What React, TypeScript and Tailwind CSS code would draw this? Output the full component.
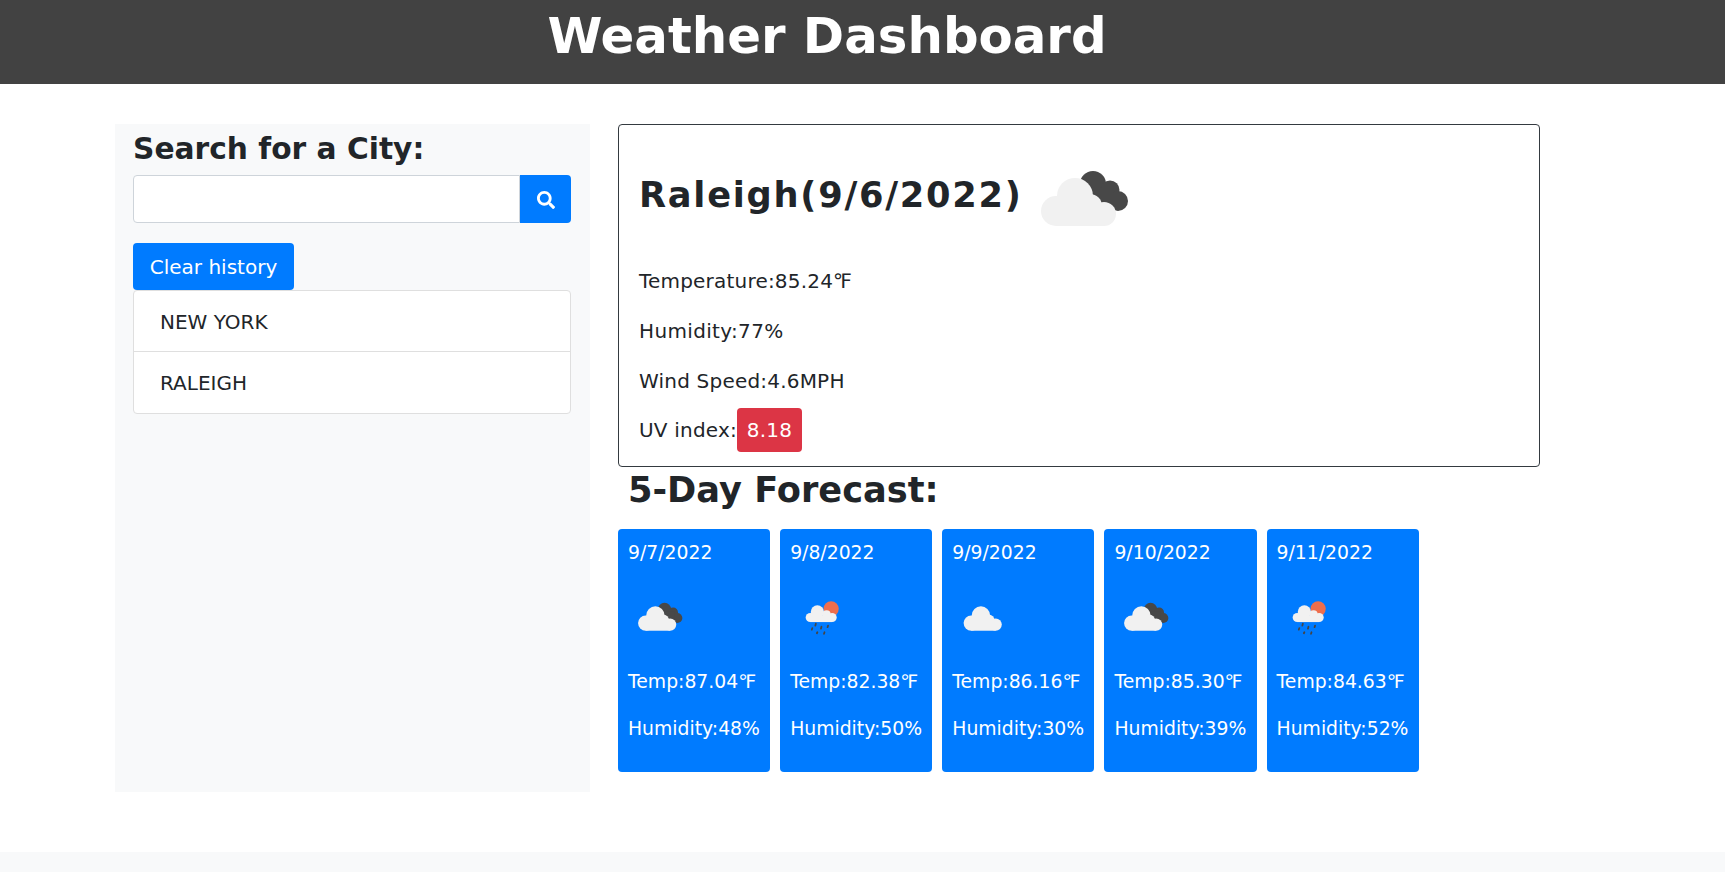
import { FaSearch } from "react-icons/fa";

type IconKind = "broken" | "scattered" | "rain";

const forecast: { date: string; icon: IconKind; temp: string; humidity: string }[] = [
  { date: "9/7/2022", icon: "broken", temp: "87.04", humidity: "48" },
  { date: "9/8/2022", icon: "rain", temp: "82.38", humidity: "50" },
  { date: "9/9/2022", icon: "scattered", temp: "86.16", humidity: "30" },
  { date: "9/10/2022", icon: "broken", temp: "85.30", humidity: "39" },
  { date: "9/11/2022", icon: "rain", temp: "84.63", humidity: "52" },
];

function LightCloud() {
  return (
    <g fill="#f1f1f1">
      <circle cx="23" cy="65" r="15" />
      <circle cx="42" cy="50" r="18" />
      <circle cx="71" cy="68" r="12" />
      <circle cx="57" cy="60" r="12" />
      <rect x="23" y="58" width="48" height="22" />
    </g>
  );
}

function WeatherIcon({ kind, className }: { kind: IconKind; className: string }) {
  if (kind === "rain") {
    return (
      <svg viewBox="0 0 110 110" className={className}>
        <circle cx="69" cy="37" r="15" fill="#ee6e4d" />
        <g fill="#f1f1f1">
          <circle cx="28" cy="54" r="9" />
          <circle cx="42" cy="43" r="13" />
          <circle cx="60" cy="48" r="8" />
          <circle cx="71" cy="54" r="9" />
          <rect x="28" y="50" width="43" height="13" />
        </g>
        <g stroke="#454545" strokeWidth="3.5" strokeLinecap="round">
          <path d="M39 66l-1 4" />
          <path d="M32 75l-1 3" />
          <path d="M50 72l-1 4" />
          <path d="M63 70l-1 3" />
          <path d="M42 83l-1 2" />
          <path d="M56 83l-1 3" />
        </g>
      </svg>
    );
  }
  if (kind === "scattered") {
    return (
      <svg viewBox="0 0 110 110" className={className}>
        <g transform="translate(3 0)">
          <LightCloud />
        </g>
      </svg>
    );
  }
  return (
    <svg viewBox="0 0 110 110" className={className}>
      <g fill="#484848">
        <circle cx="60" cy="38" r="13" />
        <circle cx="77" cy="44" r="9.5" />
        <circle cx="85" cy="55" r="10" />
        <rect x="58" y="42" width="22" height="18" />
      </g>
      <LightCloud />
    </svg>
  );
}

export default function App() {
  return (
    <div className="min-h-screen bg-white font-['DejaVu_Sans',Verdana,sans-serif] text-[20px] tracking-[0.2px] text-[#212529]">
      <header className="flex h-[84px] justify-center bg-[#424242] pt-[5px] pr-[71px]">
        <h1 className="text-[49.8px] leading-[63px] font-bold tracking-normal text-white">Weather Dashboard</h1>
      </header>

      <main className="mt-[40px] flex h-[668px] pl-[115px]">
        <aside className="w-[475px] bg-[#f8f9fa] pr-[19px] pl-[18px]">
          <h3 className="pt-[6px] text-[29.7px] leading-[37px] font-bold tracking-normal whitespace-nowrap text-[#212529]">Search for a City:</h3>
          <div className="mt-[8px] flex h-[48px]">
            <input className="min-w-0 flex-1 rounded-l-[4px] border border-[#ced4da] bg-white" />
            <button className="flex w-[51px] items-center justify-center rounded-r-[4px] bg-[#007bff] pt-[2px] text-white">
              <FaSearch size={18} />
            </button>
          </div>
          <button className="mt-[20px] block h-[47px] w-[161px] rounded-[4px] bg-[#007bff] tracking-normal text-white">Clear history</button>
          <ul className="rounded-[4px] border border-[#dfdfdf] bg-white tracking-normal">
            <li className="flex h-[61px] items-center border-b border-[#dfdfdf] pt-[1px] pl-[26px]">NEW YORK</li>
            <li className="flex h-[61px] items-center pt-[1px] pl-[26px]">RALEIGH</li>
          </ul>
        </aside>

        <section className="ml-[28px] w-[922px]">
          <div className="h-[343px] rounded-[4px] border border-[#343a40] pl-[20px]">
            <div className="flex h-[125px] items-center pt-[15px]">
              <h2 className="text-[35.2px] font-bold tracking-[1.75px] whitespace-nowrap">Raleigh(9/6/2022)</h2>
              <WeatherIcon kind="broken" className="mt-[11px] ml-[10px] h-[110px] w-[110px]" />
            </div>
            <p className="mt-[18px] leading-[26px]">Temperature:85.24℉</p>
            <p className="mt-[24px] leading-[26px] tracking-[0.35px]">Humidity:77%</p>
            <p className="mt-[24px] leading-[26px]">Wind Speed:4.6MPH</p>
            <p className="mt-[14px] flex items-center">
              UV index:
              <span className="flex h-[44px] w-[65px] items-center justify-center rounded-[4px] bg-[#dc3545] text-white">8.18</span>
            </p>
          </div>
          <h3 className="mt-[1px] ml-[10px] text-[35.2px] leading-[44px] font-bold tracking-normal">5-Day Forecast:</h3>
          <div className="mt-[17px] flex gap-[10px]">
            {forecast.map((day) => (
              <div key={day.date} className="h-[243px] w-[152.15px] rounded-[4px] bg-[#007bff] pt-[11px] pl-[10px] text-[18.8px] tracking-normal whitespace-nowrap text-white">
                <p className="leading-[26px]">{day.date}</p>
                <WeatherIcon kind={day.icon} className="mt-[24px] ml-[6px] h-[56px] w-[56px]" />
                <p className="mt-[23px] leading-[26px]">Temp:{day.temp}℉</p>
                <p className="mt-[21px] leading-[26px]">Humidity:{day.humidity}%</p>
              </div>
            ))}
          </div>
        </section>
      </main>

      <footer className="mt-[60px] h-[20px] bg-[#f8f9fa]" />
    </div>
  );
}
